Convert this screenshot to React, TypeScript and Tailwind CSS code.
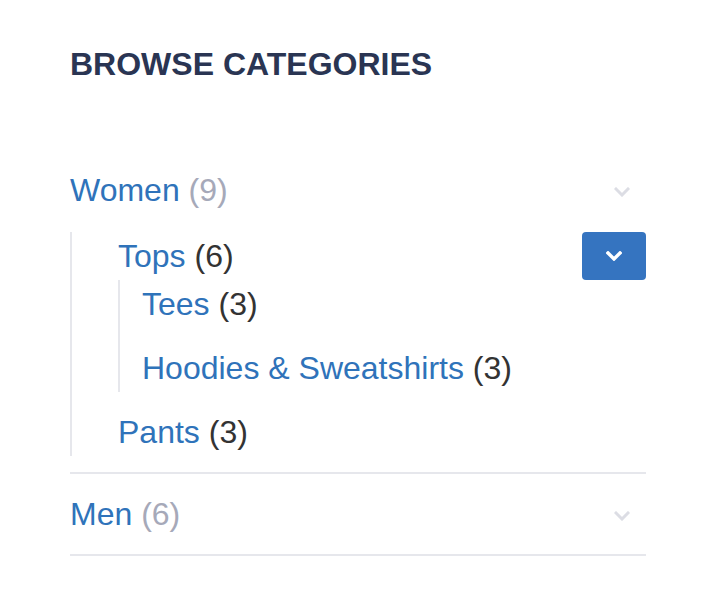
import { FunctionComponent } from "react";

const Chevron: FunctionComponent<{ className?: string; stroke?: number }> = ({ className, stroke = 3 }) => (
  <svg viewBox="0 0 16 10" className={className} fill="none" stroke="currentColor" strokeWidth={stroke} strokeLinecap="square">
    <path d="M2 2 L8 8 L14 2" />
  </svg>
);

const Row: FunctionComponent<{ label: string; count: number; muted?: boolean; className?: string; children?: React.ReactNode }> = ({
  label,
  count,
  muted,
  className = "",
  children,
}) => (
  <div className={`flex h-12 items-center justify-between ${className}`}>
    <a href="#" className="text-[32px] leading-[48px] text-[#2f73ba]">
      {label} <span className={muted ? "text-[#a6a9b9]" : "text-[#333333]"}>({count})</span>
    </a>
    {children}
  </div>
);

export default function App() {
  return (
    <div className="min-h-[608px] w-[704px] bg-white pl-[70px] pr-[58px] pt-[44px] font-['Liberation_Sans',Arial,sans-serif]">
      <h2 className="text-[32px] font-bold uppercase leading-[40px] text-[#2a3553]">Browse Categories</h2>

      <div className="mt-[82px]">
        <Row label="Women" count={9} muted className="mb-[18px]">
          <span className="flex w-12 justify-center pt-1 text-[#dcdde4]">
            <Chevron className="h-[10px] w-4" />
          </span>
        </Row>

        <div className="flex flex-col gap-4 border-l-2 border-[#e6e7ec] pl-[46px]">
          <div>
            <Row label="Tops" count={6}>
              <button className="flex h-12 w-16 items-center justify-center rounded bg-[#3574c0] text-white">
                <Chevron className="h-[10px] w-4" stroke={3.4} />
              </button>
            </Row>
            <div className="flex flex-col gap-4 border-l-2 border-[#e6e7ec] pl-[22px]">
              <Row label="Tees" count={3} />
              <Row label="Hoodies & Sweatshirts" count={3} />
            </div>
          </div>
          <Row label="Pants" count={3} />
        </div>

        <div className="mt-4 border-t-2 border-[#e6e7ec] py-4">
          <Row label="Men" count={6} muted>
            <span className="flex w-12 justify-center pt-1 text-[#dcdde4]">
              <Chevron className="h-[10px] w-4" />
            </span>
          </Row>
        </div>
        <div className="border-t-2 border-[#e6e7ec]" />
      </div>
    </div>
  );
}
